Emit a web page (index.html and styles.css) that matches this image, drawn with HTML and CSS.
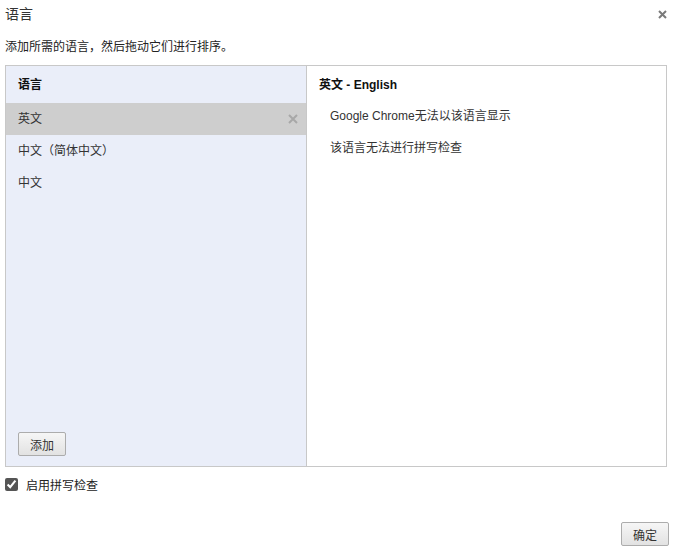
FILE: index.html
```html
<!DOCTYPE html>
<html lang="zh-CN">
<head>
  <meta charset="UTF-8" />
  <title>语言</title>
  <link rel="stylesheet" href="styles.css">
</head>
<body>
  <div class="dialog">
    <div class="title-bar">
      <h1>语言</h1>
      <span class="close">
        <svg width="9" height="9" viewBox="0 0 9 9"><path d="M1 1L8 8M8 1L1 8" stroke="#7a7a7a" stroke-width="2"/></svg>
      </span>
    </div>
    <p class="subtitle">添加所需的语言，然后拖动它们进行排序。</p>

    <div class="box">
      <div class="left">
        <div class="left-header">语言</div>
        <div class="row selected">
          <span>英文</span>
          <svg class="row-x" width="10" height="10" viewBox="0 0 10 10"><path d="M1 1L9 9M9 1L1 9" stroke="#a8a8a8" stroke-width="2"/></svg>
        </div>
        <div class="row"><span>中文（简体中文）</span></div>
        <div class="row"><span>中文</span></div>
        <div class="spacer"></div>
        <div class="add-wrap"><button class="btn">添加</button></div>
      </div>
      <div class="right">
        <div class="right-header">英文 - English</div>
        <div class="note">Google Chrome无法以该语言显示</div>
        <div class="note">该语言无法进行拼写检查</div>
      </div>
    </div>

    <label class="check">
      <input type="checkbox" checked />
      <span>启用拼写检查</span>
    </label>

    <div class="footer">
      <button class="btn">确定</button>
    </div>
  </div>
</body>
</html>
```

FILE: styles.css
```css
* {
  margin: 0; padding: 0;
  box-sizing: border-box;
}
body {
  background: #fff;
  color: #222;
  font-family: "Liberation Sans", "Noto Sans CJK SC", sans-serif;
  font-size: 12px;
  width: 679px;
  height: 554px;
}
.dialog {
  display: flex;
  flex-direction: column;
  height: 100%;
}
.title-bar {
  display: flex;
  justify-content: space-between;
  align-items: center;
  height: 26px;
  padding: 0 12px 0 5px;
}
.title-bar h1 {
  font-size: 14px;
  font-weight: normal;
  color: #333;
}
.close {
  display: flex;
  margin-top: 2px;
}
.subtitle {
  margin-top: 12px;
  padding-left: 5px;
  line-height: 18px;
  color: #222;
}
.box {
  display: flex;
  margin: 9px 12px 0 5px;
  height: 402px;
  border: 1px solid #c8c8c8;
}
.left {
  width: 301px;
  background-color: #eaeef9;
  border-right: 1px solid #c8c8c8;
  display: flex;
  flex-direction: column;
}
.left-header {
  height: 37px;
  line-height: 38px;
  padding-left: 12px;
  font-weight: bold;
  color: #111;
}
.row {
  display: flex;
  justify-content: space-between;
  align-items: center;
  height: 32px;
  padding: 0 8px 3px 12px;
  color: #333;
}
.row .row-x {
  margin-top: 3px;
}
.row.selected {
  background-color: #cecece;
}
.spacer {
  flex: 1;
}
.add-wrap {
  padding: 0 0 10px 12px;
}
.btn {
  font-family: "Liberation Sans", "Noto Sans CJK SC", sans-serif;
  font-size: 12px;
  color: #333;
  width: 48px;
  height: 24px;
  border: 1px solid #acacac;
  border-radius: 2px;
  background: linear-gradient(#f6f6f6, #e2e2e2);
  cursor: pointer;
}
.right {
  flex: 1;
  background: #fff;
}
.right-header {
  height: 37px;
  line-height: 39px;
  padding-left: 12px;
  font-weight: bold;
  color: #111;
}
.note {
  height: 32px;
  line-height: 26px;
  padding-left: 23px;
  color: #333;
}
.check {
  display: flex;
  align-items: center;
  gap: 8px;
  margin: 8px 0 0 5px;
  height: 18px;
  color: #222;
}
.check input {
  width: 13px;
  height: 13px;
  margin: 0;
  accent-color: #555;
}
.footer {
  display: flex;
  justify-content: flex-end;
  padding: 29px 10px 0 0;
}
```
